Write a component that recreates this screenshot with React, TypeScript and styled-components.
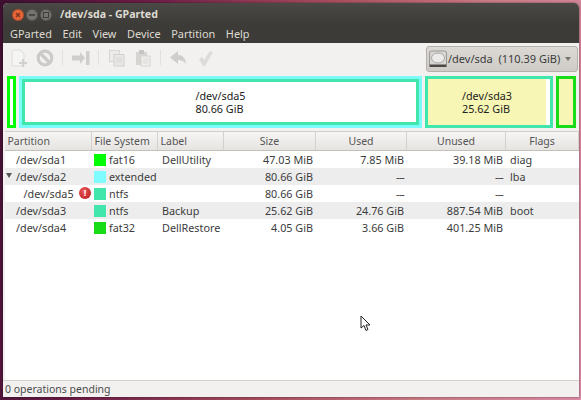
import React from "react";
import styled, { createGlobalStyle } from "styled-components";

const GlobalStyle = createGlobalStyle`
	html, body {
		margin: 0;
		padding: 0;
		width: 581px;
		height: 400px;
		overflow: hidden;
	}

	body {
		font-family: "Noto Sans", "DejaVu Sans", sans-serif;
		font-size: 10.8px;
		color: #3c3c3c;
	}
`;

const COLUMNS = "87px 66px 66px 92px 91px 99px 1fr";

const Desktop = styled.div`
	position: relative;
	box-sizing: border-box;
	width: 581px;
	height: 400px;
	padding: 3px 2px 3px 3px;
	background: linear-gradient(100deg, #3d1030 0%, #6b1c45 22%, #a8505f 52%, #c97a84 75%, #d98aa4 100%);
`;

const Window = styled.div`
	display: flex;
	flex-direction: column;
	height: 100%;
	border-radius: 5px 5px 0 0;
	overflow: hidden;
	background: #f2f1f0;
	box-shadow: 0 0 2px rgba(0, 0, 0, 0.6);
`;

const TitleBar = styled.div`
	display: flex;
	align-items: center;
	height: 22px;
	padding-left: 9px;
	background: linear-gradient(#4a4945, #3c3b37);
	color: #dfdbd2;
	font-weight: 700;
	font-size: 10.6px;
`;

const WindowButtons = styled.div`
	display: flex;
	gap: 2px;
	margin-right: 8px;
	margin-top: 1px;
`;

const WindowButton = styled.span<{ $color: string }>`
	display: flex;
	align-items: center;
	justify-content: center;
	width: 12px;
	height: 12px;
	border-radius: 50%;
	background: ${(p) => p.$color};
	box-shadow: inset 0 0 0 1px rgba(0, 0, 0, 0.25);
`;

const MenuBar = styled.div`
	display: flex;
	align-items: center;
	gap: 10.6px;
	height: 18px;
	padding: 0 0 2px 7px;
	box-sizing: border-box;
	background: #3c3b37;
	color: #dfdbd2;
	font-size: 10.9px;
`;

const Toolbar = styled.div`
	display: flex;
	align-items: center;
	height: 29px;
	padding: 0 1px 0 7px;
	background: #f2f1f0;
`;

const ToolIcon = styled.svg`
	display: block;
	width: 18px;
	height: 18px;
	margin-right: 8px;
	flex: none;
`;

const ToolSep = styled.span`
	width: 1px;
	height: 15px;
	margin-right: 9px;
	background: #e2e0de;
`;

const DeviceCombo = styled.div`
	display: flex;
	align-items: center;
	box-sizing: border-box;
	width: 152px;
	height: 26px;
	margin: 2px 0 0 auto;
	padding: 0 6px 0 2px;
	border: 1px solid #b4b0aa;
	border-radius: 3px;
	background: linear-gradient(#dcd9d5, #cfccc7);
	font-size: 11px;
	white-space: pre;
`;

const ComboArrow = styled.span`
	margin-left: auto;
	width: 0;
	height: 0;
	border-left: 3.5px solid transparent;
	border-right: 3.5px solid transparent;
	border-top: 4px solid #77736e;
`;

const DiskMap = styled.div`
	display: flex;
	gap: 3px;
	box-sizing: border-box;
	height: 59px;
	padding: 4px 2px 3px 4px;
`;

const Segment = styled.div<{ $border: string; $width: number; $fill?: string }>`
	display: flex;
	box-sizing: border-box;
	flex: none;
	width: ${(p) => p.$width}px;
	border: 3px solid ${(p) => p.$border};
	background: ${(p) => p.$fill || "#fff"};
`;

const Extended = styled.div`
	flex: none;
	box-sizing: border-box;
	width: 403px;
	border: 3px solid #7cfbfb;
	display: flex;
`;

const SegmentInner = styled.div<{ $fill: string }>`
	flex: 1;
	display: flex;
	flex-direction: column;
	align-items: center;
	justify-content: center;
	line-height: 13px;
	color: #222;
	background: ${(p) => p.$fill};
`;

const SegmentText = styled.div`
	text-align: left;
`;

const UnusedSlice = styled.div`
	width: 4px;
	background: #fff;
`;

const TableArea = styled.div`
	flex: 1;
	margin-left: 2px;
	display: flex;
	flex-direction: column;
	background: #fff;
	border-top: 1px solid #d3d0cc;
`;

const HeaderRow = styled.div`
	display: grid;
	box-sizing: border-box;
	grid-template-columns: ${COLUMNS};
	height: 19px;
	font-size: 10.5px;
	background: linear-gradient(#f6f5f4, #e6e4e1);
	border-bottom: 1px solid #c4c1bc;
`;

const HeaderCell = styled.div<{ $center?: boolean }>`
	display: flex;
	align-items: center;
	justify-content: ${(p) => (p.$center ? "center" : "flex-start")};
	padding-left: ${(p) => (p.$center ? 0 : 2.5)}px;
	border-right: 1px solid #d4d1cd;
	color: #555;
`;

const Row = styled.div<{ $odd: boolean }>`
	display: grid;
	grid-template-columns: ${COLUMNS};
	height: 17px;
	background: ${(p) => (p.$odd ? "#ededed" : "#fff")};
`;

const Cell = styled.div<{ $right?: boolean }>`
	display: flex;
	align-items: center;
	justify-content: ${(p) => (p.$right ? "flex-end" : "flex-start")};
	box-sizing: border-box;
	padding: 0 3px 0 4px;
	white-space: nowrap;
	overflow: hidden;
`;

const PartitionCell = styled(Cell)<{ $depth: number }>`
	position: relative;
	padding-left: ${(p) => 11 + p.$depth * 7.5}px;
`;

const FsCell = styled(Cell)`
	padding-left: 2px;
`;

const Expander = styled.span`
	position: absolute;
	left: 1px;
	top: 5px;
	width: 0;
	height: 0;
	border-left: 3px solid transparent;
	border-right: 3px solid transparent;
	border-top: 5px solid #555;
`;

const WarnBadge = styled.span`
	position: absolute;
	right: 1px;
	top: 2px;
	width: 12px;
	height: 12px;
	border-radius: 50%;
	background: radial-gradient(circle at 40% 35%, #ef5a5a, #b01414);
	color: #fff;
	font-size: 9px;
	font-weight: 700;
	line-height: 12px;
	text-align: center;
`;

const Swatch = styled.span<{ $color: string }>`
	flex: none;
	width: 12px;
	height: 12px;
	margin-right: 3px;
	background: ${(p) => p.$color};
`;

const Dash = styled.span`
	letter-spacing: -0.8px;
`;

const StatusBar = styled.div`
	display: flex;
	align-items: center;
	box-sizing: border-box;
	height: 17px;
	padding-left: 2px;
	font-size: 10.5px;
	background: #f2f1f0;
	border-top: 1px solid #d3d0cc;
	color: #4c4c4c;
`;

const Cursor = styled.svg`
	position: absolute;
	left: 360px;
	top: 315px;
	width: 11px;
	height: 16px;
`;

const rows = [
	{ name: "/dev/sda1", color: "#00ff00", fs: "fat16", label: "DellUtility", size: "47.03 MiB", used: "7.85 MiB", unused: "39.18 MiB", flags: "diag" },
	{ name: "/dev/sda2", color: "#7ffcff", fs: "extended", label: "", size: "80.66 GiB", used: "---", unused: "---", flags: "lba", open: true },
	{ name: "/dev/sda5", color: "#40e6ac", fs: "ntfs", label: "", size: "80.66 GiB", used: "---", unused: "---", flags: "", depth: 1, warn: true },
	{ name: "/dev/sda3", color: "#40e6ac", fs: "ntfs", label: "Backup", size: "25.62 GiB", used: "24.76 GiB", unused: "887.54 MiB", flags: "boot" },
	{ name: "/dev/sda4", color: "#18dc18", fs: "fat32", label: "DellRestore", size: "4.05 GiB", used: "3.66 GiB", unused: "401.25 MiB", flags: "" },
];

const amount = (value: string) => (value === "---" ? <Dash>{value}</Dash> : value);

const App = () => (
	<Desktop>
		<GlobalStyle />
		<Window>
			<TitleBar>
				<WindowButtons>
					<WindowButton $color="#e8663a">
						<svg width="6" height="6" viewBox="0 0 6 6">
							<path d="M1 1l4 4M5 1L1 5" stroke="#7c3318" strokeWidth="1.4" />
						</svg>
					</WindowButton>
					<WindowButton $color="#75746f">
						<svg width="6" height="6" viewBox="0 0 6 6">
							<path d="M0 3h6" stroke="#3c3b37" strokeWidth="1.3" />
						</svg>
					</WindowButton>
					<WindowButton $color="#75746f">
						<svg width="6" height="6" viewBox="0 0 6 6">
							<rect x="0.5" y="0.5" width="5" height="5" fill="none" stroke="#3c3b37" />
						</svg>
					</WindowButton>
				</WindowButtons>
				/dev/sda - GParted
			</TitleBar>
			<MenuBar>
				<span>GParted</span>
				<span>Edit</span>
				<span>View</span>
				<span>Device</span>
				<span>Partition</span>
				<span>Help</span>
			</MenuBar>
			<Toolbar>
				<ToolIcon viewBox="0 0 18 18">
					<path d="M2 1h8l4 4v12H2z" fill="#f5f5f4" stroke="#dcdbd9" />
					<path d="M12 10h2v3h3v2h-3v3h-2v-3H9v-2h3z" fill="#d2d1ce" />
				</ToolIcon>
				<ToolIcon viewBox="0 0 18 18">
					<circle cx="9" cy="9" r="6.8" fill="none" stroke="#cbcac8" strokeWidth="3.2" />
					<path d="M4.5 4.5l9 9" stroke="#cbcac8" strokeWidth="3.2" />
				</ToolIcon>
				<ToolSep />
				<ToolIcon viewBox="0 0 18 18">
					<path d="M0 6.5h8V3l5 6-5 6v-3.5H0z" fill="#cfcecc" />
					<rect x="14" y="2" width="3.5" height="14" fill="#cfcecc" />
				</ToolIcon>
				<ToolSep />
				<ToolIcon viewBox="0 0 18 18">
					<rect x="1.5" y="1.5" width="10" height="11" fill="#ecebe9" stroke="#d8d7d5" />
					<rect x="6" y="5.5" width="10" height="11.5" fill="#e8e7e5" stroke="#d2d1cf" />
					<path d="M8 9h6M8 11h6M8 13h6" stroke="#d8d7d5" />
				</ToolIcon>
				<ToolIcon viewBox="0 0 18 18">
					<rect x="2" y="3" width="11" height="13" fill="#d6d5d2" />
					<rect x="5" y="1" width="5" height="4" fill="#c6c5c3" />
					<rect x="7" y="7" width="9" height="10" fill="#efeeec" stroke="#d4d3d1" />
					<path d="M9 10h5M9 12h5M9 14h5" stroke="#dcdbd9" />
				</ToolIcon>
				<ToolSep />
				<ToolIcon viewBox="0 0 18 18">
					<path d="M8 2L0 8.5 8 15v-4c3 0 6 1 8 4 0-5-3-9-8-9z" fill="#cfcecc" />
				</ToolIcon>
				<ToolIcon viewBox="0 0 18 18">
					<path d="M3 10l3-2 2 3 6-9 3 1-8 14H7z" fill="#dcdbd9" />
				</ToolIcon>
				<DeviceCombo>
					<svg width="18" height="18" viewBox="0 0 18 18" style={{ marginRight: 1, flex: "none" }}>
						<rect x="0.5" y="1" width="17" height="15" rx="2" fill="#d8d6d3" stroke="#9a9894" />
						<ellipse cx="9" cy="8" rx="6.5" ry="5" fill="#ecebe9" stroke="#aaa8a4" />
						<rect x="0.5" y="14.5" width="17" height="2.5" fill="#4b4a47" />
					</svg>
					{"/dev/sda  (110.39 GiB)"}
					<ComboArrow />
				</DeviceCombo>
			</Toolbar>
			<DiskMap>
				<Segment $border="#00ff00" $width={9} $fill="#fff" />
				<Extended>
					<Segment $border="#40e6ac" $width={397}>
						<SegmentInner $fill="#fff">
							<SegmentText>
								/dev/sda5
								<br />
								80.66 GiB
							</SegmentText>
						</SegmentInner>
					</Segment>
				</Extended>
				<Segment $border="#40e6ac" $width={128} $fill="#f7f6b4">
					<SegmentInner $fill="#f7f6b4">
						<SegmentText>
							/dev/sda3
							<br />
							25.62 GiB
						</SegmentText>
					</SegmentInner>
					<UnusedSlice />
				</Segment>
				<Segment $border="#18dc18" $width={20} $fill="#f7f6b4" />
			</DiskMap>
			<TableArea>
				<HeaderRow>
					<HeaderCell>Partition</HeaderCell>
					<HeaderCell>File System</HeaderCell>
					<HeaderCell>Label</HeaderCell>
					<HeaderCell $center>Size</HeaderCell>
					<HeaderCell $center>Used</HeaderCell>
					<HeaderCell $center>Unused</HeaderCell>
					<HeaderCell $center>Flags</HeaderCell>
				</HeaderRow>
				{rows.map((r, i) => (
					<Row key={r.name} $odd={i % 2 === 1}>
						<PartitionCell $depth={r.depth || 0}>
							{r.open && <Expander />}
							{r.name}
							{r.warn && <WarnBadge>!</WarnBadge>}
						</PartitionCell>
						<FsCell>
							<Swatch $color={r.color} />
							{r.fs}
						</FsCell>
						<Cell>{r.label}</Cell>
						<Cell $right>{r.size}</Cell>
						<Cell $right>{amount(r.used)}</Cell>
						<Cell $right>{amount(r.unused)}</Cell>
						<Cell>{r.flags}</Cell>
					</Row>
				))}
			</TableArea>
			<StatusBar>0 operations pending</StatusBar>
		</Window>
		<Cursor viewBox="0 0 11 16">
			<path d="M1 1v12l3-2.5 2 5 2-1-2-4.5h4z" fill="#fff" stroke="#222" strokeWidth="1" />
		</Cursor>
	</Desktop>
);

export default App;
